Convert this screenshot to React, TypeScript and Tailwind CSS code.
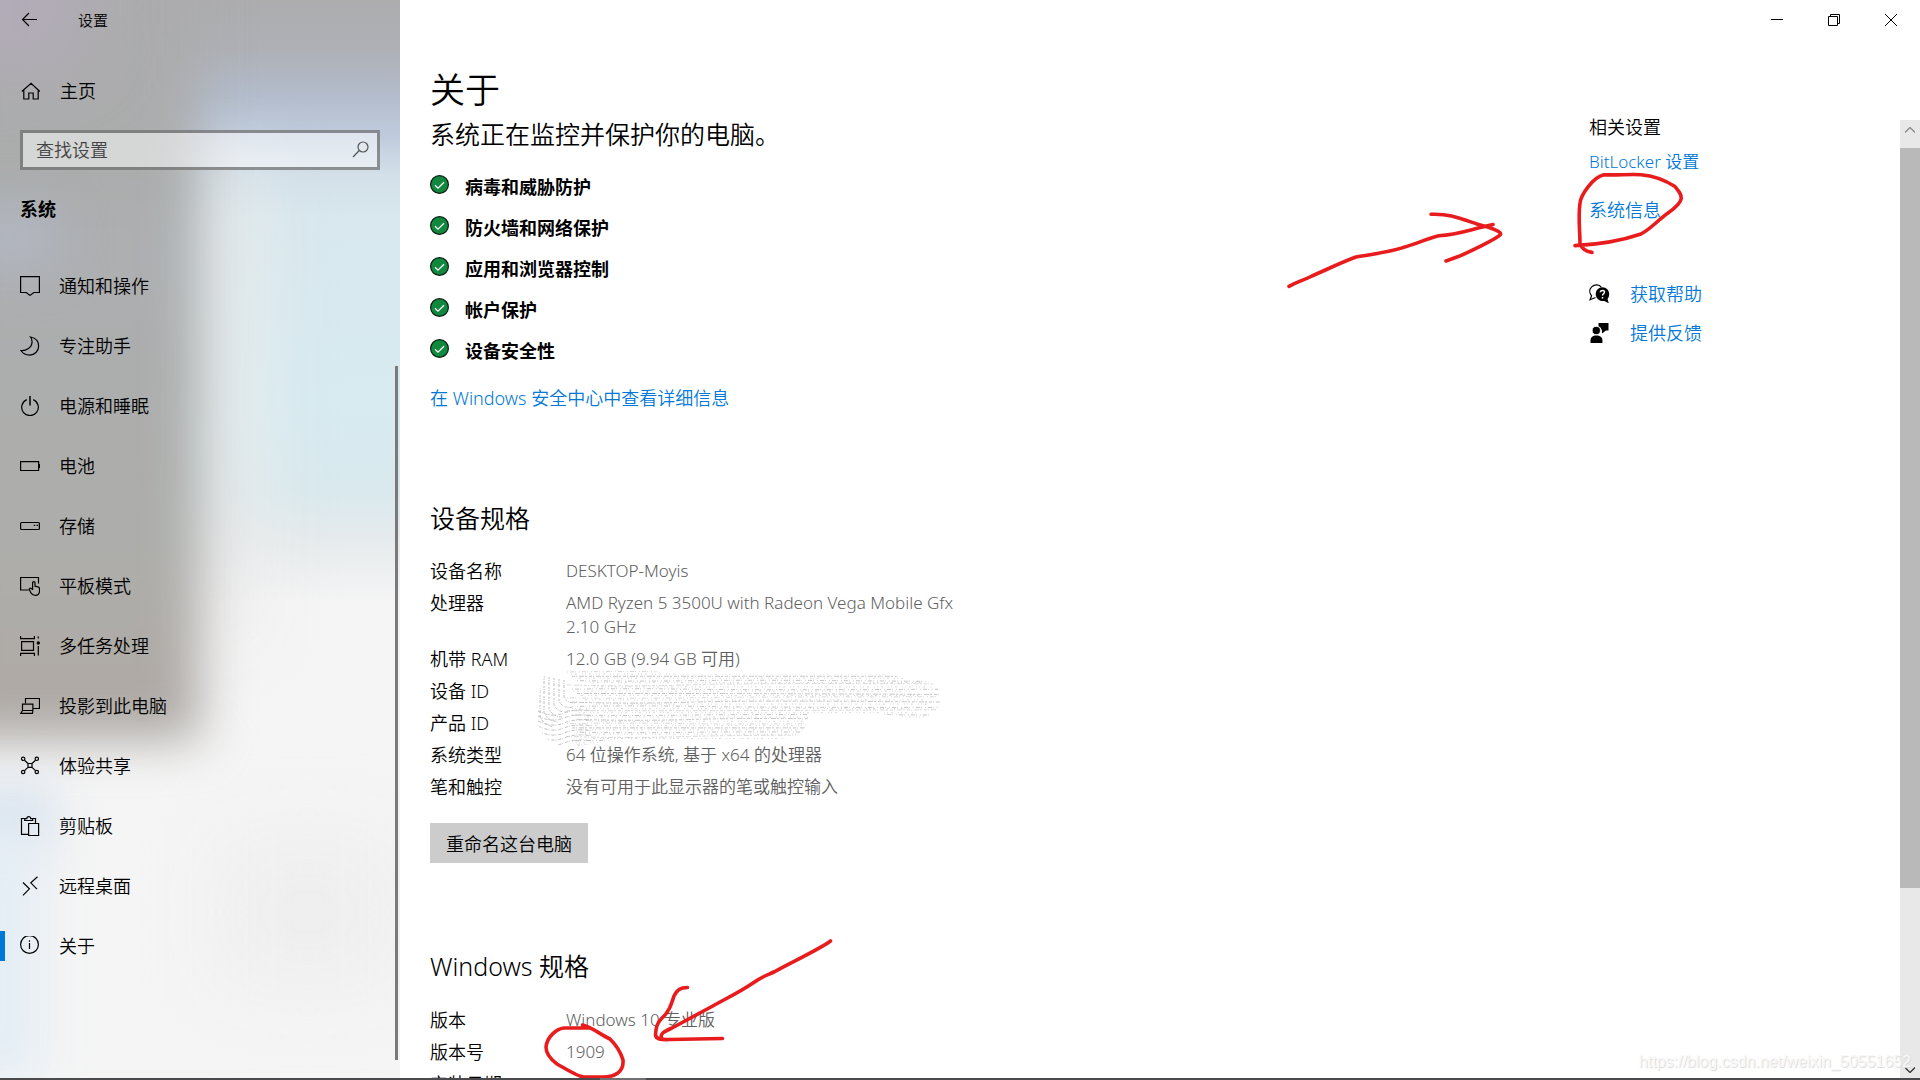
import type { ReactNode } from "react";

const Icon = ({ children, className = "" }: { children: ReactNode; className?: string }) => (
  <svg
    viewBox="0 0 20 20"
    className={`h-5 w-5 shrink-0 ${className}`}
    fill="none"
    stroke="currentColor"
    strokeWidth="1.2"
    aria-hidden="true"
  >
    {children}
  </svg>
);

const navItems: { label: string; active?: boolean; icon: ReactNode }[] = [
  {
    label: "通知和操作",
    icon: <path d="M.6.6h18.8v15.9h-5.6L10 19.4l-3.800-2.900H.6z" />,
  },
  {
    label: "专注助手",
    icon: (
      <path d="M10.500 1C16 2 18.600 6 18.600 10.200c0 5-4 8.900-8.900 8.900C6 19.100 2.800 17.300.9 14.500 6.500 15 11.600 11.200 12 6.700 12.200 4.600 11.700 2.500 10.500 1z" />
    ),
  },
  {
    label: "电源和睡眠",
    icon: (
      <>
        <path d="M6.800 3.600a8.300 8.300 0 1 0 6.400 0" />
        <path d="M10 0v9.600" strokeWidth="1.500" />
      </>
    ),
  },
  {
    label: "电池",
    icon: (
      <>
        <path d="M.6 5.600h18v8.900H.6z" />
        <path d="M19.300 8v4" strokeWidth="1.400" />
      </>
    ),
  },
  {
    label: "存储",
    icon: (
      <>
        <rect x=".6" y="6.500" width="18.800" height="7" rx="1" />
        <path d="M13.800 9.400h1.400M16.600 9.400H18" />
      </>
    ),
  },
  {
    label: "平板模式",
    icon: (
      <>
        <path d="M8.800 14H.6V1.500h17.900v6" />
        <path d="M12.600 14V6.800c0-1.600 2.400-1.600 2.400 0v3.400l3 .7c1 .2 1.500.8 1.500 1.800V15c0 2.600-1.700 4.400-4.200 4.400-2 0-3.400-.8-4.300-2.500l-1.700-3.400c-.2-1.200 1.300-2 2.100-1l1.200 1.500" />
      </>
    ),
  },
  {
    label: "多任务处理",
    icon: (
      <>
        <path d="M1.600 5.600h11.900v8.800H1.600z" />
        <path d="M.6 0v2.700h13.800V0M.6 20v-2.700h13.800V20M18.300.5v2M18.300 10v9.500" />
        <circle cx="18.300" cy="7" r="1.700" fill="currentColor" stroke="none" />
      </>
    ),
  },
  {
    label: "投影到此电脑",
    icon: (
      <>
        <path d="M5.500 7.500V2.500h14v10h-6.600" />
        <path d="M2.500 14.500V8.100h10.400v6.400M2.500 14.500h10.400M2.500 14.500L.8 17.400h11.600l.5-2.900" />
      </>
    ),
  },
  {
    label: "体验共享",
    icon: (
      <>
        <circle cx="3.200" cy="2.800" r="1.700" />
        <circle cx="16.800" cy="2.800" r="1.700" />
        <circle cx="3.200" cy="16" r="1.700" />
        <circle cx="16.800" cy="16" r="1.700" />
        <path d="M4.500 4.200L8 7.500M15.500 4.200L12 7.500M4.500 14.600L8 11.400M15.500 14.600L12 11.400M8 7.500h4v3.900H8z" />
      </>
    ),
  },
  {
    label: "剪贴板",
    icon: (
      <>
        <path d="M8.500 18.400H1.500V2.500h3.800M12.500 2.500h3v4.600M4.700 4.500h8V2.600h-2c0-2.600-3.900-2.600-3.900 0H4.700z" />
        <path d="M8.600 7.500h10v12h-10z" />
      </>
    ),
  },
  {
    label: "远程桌面",
    icon: <path d="M17.500.7L10.800 6.800l6.200 6.400M3 6.500l6.400 6.300L3 19.300" />,
  },
  {
    label: "关于",
    active: true,
    icon: (
      <>
        <circle cx="9.500" cy="8.500" r="8.900" />
        <path d="M9.500 7v6M9.500 4.300v1.400" />
      </>
    ),
  },
];

const protections = [
  "病毒和威胁防护",
  "防火墙和网络保护",
  "应用和浏览器控制",
  "帐户保护",
  "设备安全性",
];

const deviceSpecs = [
  ["设备名称", "DESKTOP-Moyis"],
  ["处理器", "AMD Ryzen 5 3500U with Radeon Vega Mobile Gfx 2.10 GHz"],
  ["机带 RAM", "12.0 GB (9.94 GB 可用)"],
  ["设备 ID", ""],
  ["产品 ID", ""],
  ["系统类型", "64 位操作系统, 基于 x64 的处理器"],
  ["笔和触控", "没有可用于此显示器的笔或触控输入"],
];

const windowsSpecs = [
  ["版本", "Windows 10 专业版"],
  ["版本号", "1909"],
  ["安装日期", "2020/11/5"],
];

const SpecTable = ({ rows }: { rows: string[][] }) => (
  <table className="w-[540px] max-w-full text-left leading-6">
    <tbody>
      {rows.map(([name, value]) => (
        <tr key={name} className="align-top">
          <th scope="row" className="w-[136px] pb-2 text-lg leading-6 font-[350]">
            {name}
          </th>
          <td className="pb-2 text-[17px] text-[#606060]">{value}</td>
        </tr>
      ))}
    </tbody>
  </table>
);

// Soft light showing through the translucent pane
const Backdrop = () => (
  <div className="absolute inset-0 -z-10 overflow-hidden bg-[#f5f5f5]">
    <div className="absolute inset-x-0 top-0 h-[600px] bg-[linear-gradient(to_bottom,#adadae_0px,#aeb0b6_50px,#b3bccb_95px,#bfcbdd_135px,#d3e0e9_175px,#d8e8ee_220px,#d7ebf1_400px,#d9e9ee_490px,#e6ebed_540px,#f4f4f4_600px)]" />
    <div className="absolute top-44 left-[180px] h-[460px] w-[70px] bg-[#ebebeb] blur-2xl" />
    <div className="absolute -top-16 -left-16 h-[804px] w-[264px] bg-[linear-gradient(to_bottom,#acabad_0px,#abadad_250px,#adafb2_310px,#acadad_420px,#adaeab_600px,#afaaa6_740px,#aca8a4_800px)] blur-[24px]" />
    <div className="absolute -top-10 -left-10 h-24 w-28 bg-[#b5acbd] blur-2xl" />
    <div className="absolute top-[210px] -left-10 h-14 w-24 bg-[#b2b7c2] blur-xl" />
    <div className="absolute top-[785px] -left-10 h-16 w-24 bg-[#d9e4f0] blur-xl" />
    <div className="absolute top-[840px] -left-10 h-60 w-20 bg-[#e3edf5] blur-xl" />
    <div className="absolute top-[840px] left-[220px] h-36 w-44 bg-[#eeeeef] blur-2xl" />
  </div>
);

const Sidebar = () => (
  <aside className="relative isolate flex w-[400px] shrink-0 flex-col">
    <Backdrop />
    <header className="flex h-10 items-center gap-[38px] pl-5">
      <button aria-label="返回" className="flex h-10 w-5 items-center">
        <Icon>
          <path d="M17 9.500H2.500M9 3L2.500 9.500 9 16" />
        </Icon>
      </button>
      <span className="text-[15px] leading-5">设置</span>
    </header>
    <a href="#home" className="mt-[21px] flex h-[60px] items-center gap-5 pl-5 text-lg">
      <Icon>
        <path d="M1.800 10.500L11.100 2.200l8.700 8.300M3.800 9v9h5v-6h4.400v6h5V9" />
      </Icon>
      主页
    </a>
    <label className="mx-5 mt-[9px] flex h-10 items-center border-3 border-black/40 bg-white/50 pr-[6px] pl-[13px]">
      <input
        type="search"
        aria-label="查找设置"
        placeholder="查找设置"
        className="min-w-0 flex-1 bg-transparent text-lg outline-none placeholder:text-[#444]"
      />
      <Icon className="text-[#555]">
        <circle cx="12" cy="7" r="5" />
        <path d="M8.300 10.500L2 17" />
      </Icon>
    </label>
    <h2 className="mt-6 pl-5 text-lg leading-[30px] font-bold">系统</h2>
    <nav className="mt-8">
      <ul>
        {navItems.map(({ label, active, icon }) => (
          <li key={label} className="flex h-[60px] items-center">
            <span className={active ? "h-[30px] w-[5px] bg-[#0078d7]" : "w-[5px]"} />
            <a
              href={`#${label}`}
              aria-current={active ? "page" : undefined}
              className="flex items-center gap-[19px] pl-[15px] text-lg"
            >
              <Icon>{icon}</Icon>
              {label}
            </a>
          </li>
        ))}
      </ul>
    </nav>
    <div className="absolute top-[366px] right-[2px] bottom-[18px] w-[3px] bg-[#7a7a7a]" />
  </aside>
);

const TitleBar = () => (
  <div className="flex h-10 justify-end pr-px">
    <button aria-label="最小化" className="flex w-[57px] items-center justify-center">
      <svg viewBox="0 0 12 12" className="h-3 w-3" stroke="#000">
        <path d="M0 5.500h12" />
      </svg>
    </button>
    <button aria-label="还原" className="flex w-[57px] items-center justify-center">
      <svg viewBox="0 0 12 12" className="h-3 w-3" fill="none" stroke="#000">
        <path d="M.5 2.500h9v9h-9zM2.500 2.500v-2h9v9h-2" />
      </svg>
    </button>
    <button aria-label="关闭" className="flex w-[57px] items-center justify-center">
      <svg viewBox="0 0 12 12" className="h-3 w-3" stroke="#000">
        <path d="M0 0l12 12M12 0L0 12" />
      </svg>
    </button>
  </div>
);

const streaks = Array.from({ length: 18 }, (_, i) => i);

// Smudge that hides the two ID values
const Smudge = () => (
  <svg
    viewBox="0 0 404 80"
    className="pointer-events-none absolute top-[110px] left-[107px] h-[80px] w-[404px]"
    fill="none"
    stroke="#bdbdbd"
    aria-hidden="true"
  >
    <clipPath id="smudge">
      <path d="M16 1h88l40 4h205l28 6c22 0 27 8 26 20 0 12-10 19-30 18l-30-4h-72c0 16-10 25-30 25H78C60 74 42 79 22 76 6 72 0 60 1 47c0-12 1-26 5-37 2-6 4-9 10-9z" />
    </clipPath>
    <g clipPath="url(#smudge)">
      {streaks.map((i) => (
        <g key={i}>
          <path
            d={`M${30 + (i % 3) * 5} ${3 + i * 4.300}q60 ${(i % 4) - 1} 120 0t250 ${(i % 3) - 1}`}
            strokeWidth="1"
            strokeDasharray={i % 2 ? "3 1 1 2 5 1 2 2" : "1 2 4 1 1 3"}
            opacity={i % 3 ? 0.9 : 0.6}
          />
          <path
            d={`M${34 + (i % 4) * 7} ${5 + i * 4.300}h340`}
            strokeWidth=".8"
            strokeDasharray="1 3 2 5 1 2"
            strokeDashoffset={i * 3}
            opacity=".7"
          />
        </g>
      ))}
      {[3, 7, 12, 17, 22, 27].map((x, i) => (
        <path
          key={x}
          d={`M${x} ${6 + i}V${48 - i * 4}q4 8 14 ${10 - i}`}
          strokeDasharray="2 1 1 1 3 2"
        />
      ))}
      {[42, 47, 52, 57, 62, 67, 72].map((y) => (
        <path key={y} d={`M1 ${y}q14 7 26 2t28-2`} strokeDasharray="3 1 1 2" />
      ))}
    </g>
  </svg>
);

const CheckBadge = () => (
  <svg viewBox="0 0 19 19" className="h-[19px] w-[19px] shrink-0" fill="none" aria-hidden="true">
    <circle cx="9.500" cy="9.500" r="8.900" fill="#10893e" stroke="#0b1f12" strokeWidth="1.200" />
    <path d="M5 10.200l3 3 6-6" stroke="#fff" strokeWidth="1.300" />
  </svg>
);

const Related = () => (
  <aside className="relative w-[311px] shrink-0 text-lg leading-6">
    <h2 className="leading-4">相关设置</h2>
    <ul className="mt-[14px] text-[#0078d7]">
      <li>
        <a href="#bitlocker" className="text-[17px]">BitLocker 设置</a>
      </li>
      <li className="mt-6">
        <a href="#system-info">系统信息</a>
      </li>
      <li className="mt-[60px]">
        <a href="#help" className="flex items-center gap-5">
          <svg viewBox="0 0 21 20" className="h-5 w-[21px] text-black" aria-hidden="true">
            <path
              d="M6.500 13.500L1 15.800l1.600-4C.2 9 .2 5.300 2.700 2.900c3-2.800 7.500-2.600 9.700.5"
              fill="none"
              stroke="currentColor"
              strokeWidth="1.200"
            />
            <path
              d="M13.500 3.200c3.800 0 6.700 3 6.700 6.800 0 2.200-.7 3.800-1.700 5l1.300 4.300-4.600-2.400c-4.600.8-8.500-2.500-8.500-6.900 0-3.800 3-6.800 6.800-6.800z"
              fill="currentColor"
            />
            <path d="M11.300 8.300c.2-2.600 4.400-2.400 4.200 0-.1 1.500-2 1.500-2 3.200M13.500 13v1.600" fill="none" stroke="#fff" strokeWidth="1.500" />
          </svg>
          获取帮助
        </a>
      </li>
      <li className="mt-[15px]">
        <a href="#feedback" className="flex items-center gap-5">
          <svg viewBox="0 0 21 20" className="h-5 w-[21px] text-black" fill="currentColor" aria-hidden="true">
            <path d="M9.500 0h10v7.500H17L13 10.500V7.500l-1.500-3-2-1.200z" />
            <circle cx="7.300" cy="7.500" r="4.100" stroke="#fff" strokeWidth=".8" />
            <path d="M1.500 20v-2.500c0-3.200 2.300-5 5.900-5s6 1.800 6 5V20z" />
          </svg>
          提供反馈
        </a>
      </li>
    </ul>
    {/* hand-drawn arrow and ring around the system info link */}
    <svg
      viewBox="1280 160 410 140"
      className="pointer-events-none absolute top-[41px] -left-[309px] h-[140px] w-[410px]"
      fill="none"
      stroke="#e81c1c"
      strokeWidth="3.600"
      strokeLinecap="round"
      strokeLinejoin="round"
      aria-hidden="true"
    >
      <path d="M1289 286.400C1297 281.700 1302 281 1312 276 1328 269 1342 262 1356 257 1372 254 1386 253 1403 247.600 1418 243.600 1428 238 1439 235.700 1458 235 1470 229.400 1493 224.600" />
      <path d="M1431 214.300C1449 213.600 1458 217.500 1477 224 1492 228 1503 232 1500 235 1496 239 1470 251.600 1459 256.300L1446 261" />
      <path d="M1575 245.600C1600 244.400 1622 240.500 1641 234 1652 228 1658 220 1668 213 1686 200 1683 196 1675 186.600 1663 178.700 1651 175.500 1641 174.700 1628 174 1616 175.500 1604 174.700 1593 177 1581 194.500 1580 203 1578 217 1580 232.600 1580 243.600 1582 249 1586 251.600 1592 252.400" />
    </svg>
  </aside>
);

const About = () => (
  <div className="min-w-0 flex-1">
    <h2 className="text-[25px] leading-7">系统正在监控并保护你的电脑。</h2>
    <ul className="mt-[27px]">
      {protections.map((name) => (
        <li key={name} className="flex h-[41px] items-start gap-4 text-lg leading-6 font-bold">
          <CheckBadge />
          {name}
        </li>
      ))}
    </ul>
    <a href="#security" className="mt-[6px] block text-lg leading-6 text-[#0078d7]">
      在 Windows 安全中心中查看详细信息
    </a>

    <h2 className="mt-[93px] text-[25px] leading-[30px]">设备规格</h2>
    <div className="relative mt-[26px]">
      <SpecTable rows={deviceSpecs} />
      <Smudge />
    </div>
    <button className="mt-4 h-10 bg-[#ccc] px-4 pt-[2px] text-lg">重命名这台电脑</button>

    <h2 className="mt-[88px] text-[25px] leading-[30px]">Windows 规格</h2>
    <div className="relative mt-[27px]">
      <SpecTable rows={windowsSpecs} />
      <svg
        viewBox="540 930 300 150"
        className="pointer-events-none absolute -top-[77px] left-[110px] h-[150px] w-[300px]"
        fill="none"
        stroke="#e81c1c"
        strokeWidth="3.600"
        strokeLinecap="round"
        strokeLinejoin="round"
        aria-hidden="true"
      >
        <path d="M830.500 940C820 948 790 962 775 970.500 765 975 761 976 753 982 740 991 725 998 710 1006.500L672 1027C663 1031 660 1033 661.500 1037" />
        <path d="M687.500 986.500C680 986.500 677 989 674 995 671 1004 669 1011 662 1017 656 1023 656 1028 655.500 1034 656 1038 660 1039 670 1038.500L722.500 1037.500" />
        <path d="M582.500 1024C592 1026 601 1034 610 1038 616 1044 621 1052 623 1059 624 1071 615 1076 603 1076L584 1076C578 1076 566 1068 557 1063 549 1057 546 1052 546 1046 547 1036 556 1028 564 1027L590 1027" />
      </svg>
    </div>
  </div>
);

const ScrollBar = () => (
  <div className="mt-2 flex w-5 shrink-0 flex-col bg-[#e8e8e8]">
    <button aria-label="向上滚动" className="flex h-7 items-center justify-center pb-2">
      <svg viewBox="0 0 10 6" className="h-[6px] w-[10px]" fill="none" stroke="#8a8a8a" strokeWidth="1.300">
        <path d="M0 5.500l5-5 5 5" />
      </svg>
    </button>
    <div className="h-[740px] bg-[#b9b9b9]" />
    <button aria-label="向下滚动" className="mt-auto flex h-4 items-center justify-center">
      <svg viewBox="0 0 10 6" className="h-[6px] w-[10px]" fill="none" stroke="#333" strokeWidth="1.300">
        <path d="M0 .5l5 5 5-5" />
      </svg>
    </button>
  </div>
);

const App = () => {
  return (
    <div className="relative flex h-screen flex-col overflow-hidden bg-white font-['Noto_Sans','Noto_Sans_CJK_SC',sans-serif] font-[350] text-black">
      <div className="flex min-h-0 flex-1">
        <Sidebar />
        <main className="flex min-w-0 flex-1 flex-col">
          <TitleBar />
          <h1 className="h-[72px] pt-7 pl-[30px] text-[35px] leading-[44px]">关于</h1>
          <div className="flex min-h-0 flex-1">
            <div className="flex min-w-0 flex-1 overflow-hidden pt-2 pl-[30px]">
              <About />
            </div>
            <div className="pt-[7px]">
              <Related />
            </div>
            <ScrollBar />
          </div>
        </main>
      </div>
      <div className="h-[2px] shrink-0 bg-[#4a4a4c]">
        <div className="ml-[600px] h-full w-[46px] bg-[#707072]" />
      </div>
      <span className="pointer-events-none absolute right-[9px] bottom-2 font-['Liberation_Sans',sans-serif] text-base leading-5 font-normal text-[#f8f8f8] [text-shadow:1px_1px_1px_#d8d8d8]">
        https://blog.csdn.net/weixin_50551652
      </span>
    </div>
  );
};

export default App;
